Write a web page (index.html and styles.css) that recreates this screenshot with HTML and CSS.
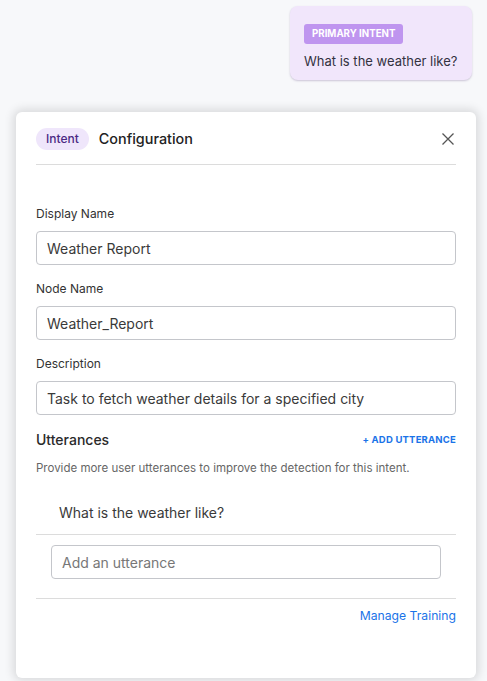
FILE: index.html
```html
<!DOCTYPE html>
<html>
<head>
<meta charset="utf-8">
<link rel="stylesheet" href="styles.css">
</head>
<body>
<div class="page">
  <div class="bubble-row">
    <div class="bubble">
      <span class="badge">PRIMARY INTENT</span>
      <div class="bubble-text">What is the weather like?</div>
    </div>
  </div>
  <div class="panel">
    <div class="header">
      <span class="pill">Intent</span>
      <span class="title">Configuration</span>
      <svg class="close" width="14" height="14" viewBox="0 0 14 14"><path d="M1.5 1.5 L12.5 12.5 M12.5 1.5 L1.5 12.5" stroke="#555" stroke-width="1.3" fill="none"/></svg>
    </div>
    <div class="form">
      <label class="label">Display Name</label>
      <div class="input">Weather Report</div>
      <label class="label">Node Name</label>
      <div class="input">Weather_Report</div>
      <label class="label">Description</label>
      <div class="input">Task to fetch weather details for a specified city</div>
      <div class="utt-head">
        <span class="utt-title">Utterances</span>
        <span class="add">+ ADD UTTERANCE</span>
      </div>
      <div class="hint">Provide more user utterances to improve the detection for this intent.</div>
      <div class="utt-item">What is the weather like?</div>
      <div class="utt-input-wrap">
        <div class="input placeholder">Add an utterance</div>
      </div>
      <div class="footer"><span class="link">Manage Training</span></div>
    </div>
  </div>
</div>
</body>
</html>
```
FILE: styles.css
```css
html, body { margin: 0; padding: 0; }
body {
  background: #f7f8fa;
  font-family: Inter, "Noto Sans", sans-serif;
  color: #222;
  width: 487px;
  height: 681px;
  overflow: hidden;
}
.page { display: flex; flex-direction: column; }
.bubble-row { display: flex; justify-content: flex-end; padding: 6px 15px 0 0; }
.bubble {
  width: 182px;
  height: 74px;
  box-sizing: border-box;
  background: #f1e6fb;
  border-radius: 8px;
  box-shadow: 0 1px 2px rgba(120, 100, 150, 0.35);
  padding: 15px 14px 0 14px;
}
.badge {
  display: inline-block;
  background: #bf95ef;
  color: #fff;
  font-size: 9.7px;
  font-weight: 700;
  padding: 0 8px;
  height: 20px;
  line-height: 20px;
  border-radius: 3px;
}
.bubble-text { margin-top: 9px; font-size: 13px; color: #33323f; }
.panel {
  margin: 32px 11px 0 16px;
  height: 566px;
  background: #fff;
  border-radius: 6px;
  box-shadow: 0 0 10px 3px rgba(0, 0, 0, 0.12);
  padding: 0 20px;
}
.header {
  display: flex;
  align-items: center;
  height: 52px;
  border-bottom: 1px solid #dcdcdc;
}
.pill {
  background: #efe6fb;
  color: #4b2a84;
  font-size: 12px;
  font-weight: 500;
  height: 22px;
  line-height: 22px;
  padding: 0 10px;
  border-radius: 11px;
  margin-top: 1px;
}
.title { margin-left: 10px; font-size: 14.4px; font-weight: 500; color: #222; margin-top: 1px; }
.close { margin-left: auto; margin-right: 1px; margin-top: 1px; }
.form { display: flex; flex-direction: column; padding-top: 41px; }
.label { font-size: 12px; color: #333; height: 15px; line-height: 15px; margin-bottom: 10px; }
.input {
  height: 34px;
  box-sizing: border-box;
  border: 1px solid #c4c6cb;
  border-radius: 4px;
  padding: 0 10px;
  font-size: 14px;
  line-height: 33px;
  color: #3a3a3a;
  margin-bottom: 16px;
}
.utt-head { display: flex; justify-content: space-between; align-items: center; height: 17px; }
.utt-title { font-size: 14px; font-weight: 500; color: #2a2a2a; }
.add { font-size: 9.5px; font-weight: 700; color: #1a73e8; letter-spacing: 0.2px; }
.hint { font-size: 11.5px; color: #666; margin-top: 13px; line-height: 14px; }
.utt-item {
  font-size: 14px;
  line-height: 17px;
  color: #3a3a3a;
  padding: 29px 0 13px 23px;
  border-bottom: 1px solid #dcdcdc;
}
.utt-input-wrap { padding: 10px 15px 19px 15px; border-bottom: 1px solid #dcdcdc; }
.utt-input-wrap .input { margin-bottom: 0; }
.placeholder { color: #777; }
.footer { display: flex; justify-content: flex-end; padding-top: 9px; }
.link { font-size: 12.2px; color: #1a73e8; }
```
